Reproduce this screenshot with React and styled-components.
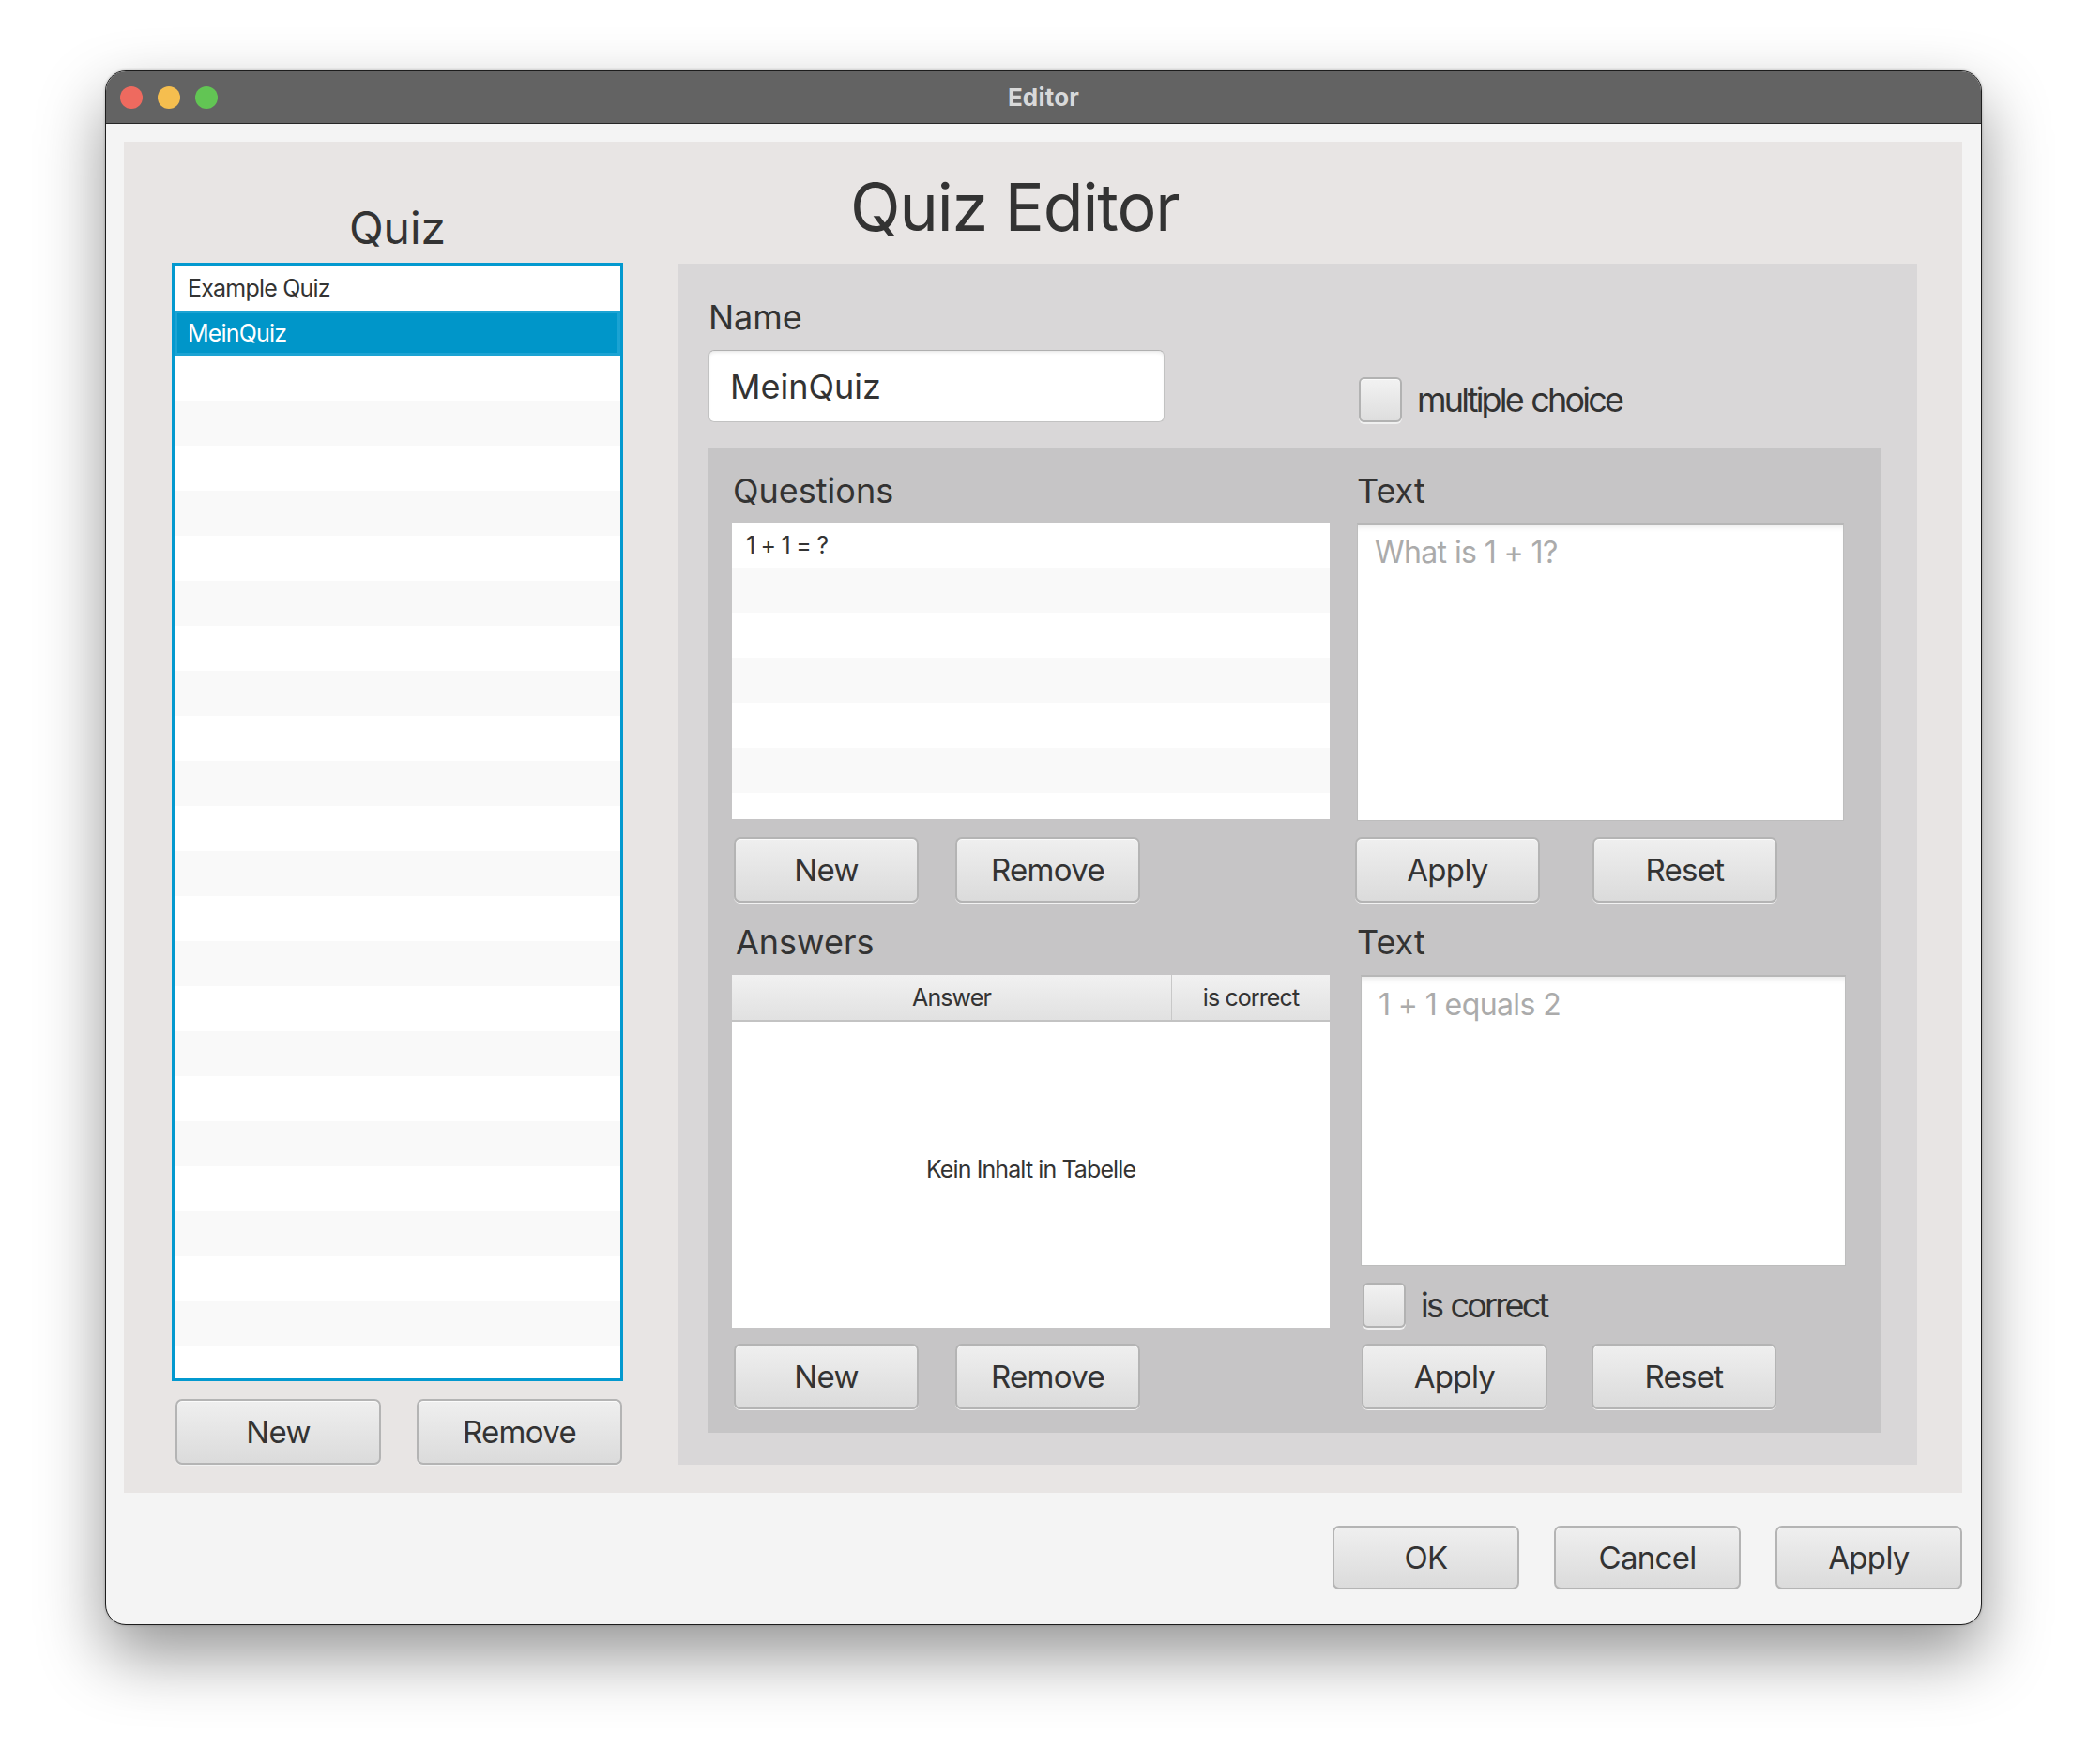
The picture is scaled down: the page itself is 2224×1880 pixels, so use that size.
import React from "react";
import styled, { createGlobalStyle } from "styled-components";

const GlobalStyle = createGlobalStyle`
  html, body {
    margin: 0;
    padding: 0;
    background: #ffffff;
  }
  body {
    font-family: Inter, "Noto Sans", "Liberation Sans", sans-serif;
    color: #333333;
  }
  * {
    box-sizing: border-box;
  }
`;

const Page = styled.div`
  width: 2224px;
  height: 1880px;
  padding: 75px 0 0 112px;
  overflow: hidden;
`;

const Window = styled.div`
  width: 2000px;
  height: 1657px;
  border: 1px solid #1d1d1d;
  border-radius: 22px;
  overflow: hidden;
  background: #f4f4f4;
  box-shadow: 0 32px 70px rgba(0, 0, 0, 0.42), 0 0 3px rgba(0, 0, 0, 0.25);
  display: flex;
  flex-direction: column;
`;

const TitleBar = styled.div`
  position: relative;
  height: 56px;
  flex: none;
  background: #636363;
  border-bottom: 1px solid #262626;
  display: flex;
  align-items: center;
  justify-content: center;
`;

const Lights = styled.div`
  position: absolute;
  left: 15px;
  top: 16px;
  display: flex;
  gap: 16px;
`;

const Light = styled.span`
  width: 24px;
  height: 24px;
  border-radius: 50%;
  background: ${(p) => p.$color};
`;

const WindowTitle = styled.div`
  font-size: 26px;
  font-weight: 700;
  color: #d9d9d9;
  letter-spacing: 0.2px;
`;

const Content = styled.div`
  flex: 1;
  padding: 19px 20px 0 19px;
  display: flex;
  flex-direction: column;
`;

const InnerPanel = styled.div`
  height: 1440px;
  background: #e8e5e4;
  display: flex;
  gap: 59px;
  padding-left: 51px;
`;

const LeftColumn = styled.div`
  width: 481px;
  display: flex;
  flex-direction: column;
`;

const LeftTitle = styled.div`
  height: 129px;
  padding-top: 68px;
  font-size: 48px;
  line-height: 48px;
  text-align: center;
  color: #333;
`;

const QuizList = styled.div`
  height: 1192px;
  border: 3px solid #0399cf;
  background: #ffffff;
  overflow: hidden;
`;

const ListRow = styled.div`
  height: 48px;
  flex: none;
  display: flex;
  align-items: center;
  padding-left: ${(p) => p.$pad || 14}px;
  font-size: 25px;
  letter-spacing: -0.8px;
  color: ${(p) => (p.$selected ? "#ffffff" : "#333333")};
  background: ${(p) =>
    p.$selected ? "#0096c9" : p.$odd ? "#f9f9f9" : "#ffffff"};
  box-shadow: ${(p) => (p.$selected ? "inset 0 0 0 3px #1ba3d3" : "none")};
`;

const LeftButtons = styled.div`
  margin-top: 19px;
  padding: 0 1px 0 4px;
  display: flex;
  justify-content: space-between;
`;

const Button = styled.button`
  width: ${(p) => p.$w || 197}px;
  height: ${(p) => p.$h || 70}px;
  border: 2px solid #b4b4b4;
  border-radius: 7px;
  background: linear-gradient(#efefef, #dbdbdb);
  box-shadow: inset 0 1px 0 #fbfbfb, 0 1px 0 #f2f2f2;
  font-family: inherit;
  font-size: 33px;
  letter-spacing: -0.7px;
  color: #333333;
  padding: 0;
  cursor: default;
`;

const RightColumn = styled.div`
  width: 1320px;
  display: flex;
  flex-direction: column;
`;

const EditorTitle = styled.div`
  height: 130px;
  padding-top: 35px;
  padding-left: 183px;
  font-size: 70px;
  line-height: 70px;
  letter-spacing: -1.1px;
  color: #333;
`;

const RightPanel = styled.div`
  height: 1280px;
  background: #d9d7d8;
  padding: 39px 38px 0 32px;
  display: flex;
  flex-direction: column;
`;

const Label = styled.div`
  font-size: 36px;
  line-height: 36px;
  color: #333;
  margin-top: ${(p) => p.$mt || 0}px;
  margin-bottom: ${(p) => p.$mb || 0}px;
  padding-left: ${(p) => p.$pl || 0}px;
`;

const NameRow = styled.div`
  display: flex;
  align-items: flex-end;
  height: 77px;
`;

const TextField = styled.div`
  width: 486px;
  height: 77px;
  background: #ffffff;
  border: 1px solid #c2c2c2;
  border-top-color: #b0b0b0;
  border-radius: 6px;
  box-shadow: inset 0 3px 4px -2px rgba(0, 0, 0, 0.12);
  display: flex;
  align-items: center;
  padding-left: 22px;
  font-size: 36px;
  color: #333;
`;

const CheckGroup = styled.label`
  display: flex;
  align-items: center;
  gap: 16px;
  margin-left: ${(p) => p.$ml || 0}px;
  font-size: 36px;
  letter-spacing: -2.8px;
  word-spacing: 2px;
  color: #333;
`;

const CheckBox = styled.span`
  width: 46px;
  height: 48px;
  flex: none;
  border: 2px solid #b2b2b2;
  border-radius: 6px;
  background: linear-gradient(#f2f2f2, #dedede);
  box-shadow: inset 0 1px 0 #fafafa, 0 2px 0 #f0f0f0;
`;

const DarkPanel = styled.div`
  margin-top: 27px;
  background: #c6c5c6;
  padding: 28px 40px 25px 25px;
  display: grid;
  grid-template-columns: 637px 519px;
  column-gap: 29px;
  align-items: start;
`;

const StripedList = styled.div`
  height: 316px;
  background: #ffffff;
  overflow: hidden;
  display: flex;
  flex-direction: column;
`;

const TextArea = styled.div`
  height: ${(p) => p.$h}px;
  width: ${(p) => p.$w || 517}px;
  margin-left: ${(p) => p.$ml || 0}px;
  background: #ffffff;
  border: 1px solid #bdbdbd;
  border-top: 2px solid #b7b7b7;
  box-shadow: inset 0 6px 6px -4px rgba(0, 0, 0, 0.1);
  padding: 11px 18px;
  font-size: 32px;
  line-height: 38px;
  letter-spacing: -0.6px;
  color: #ababab;
`;

const ButtonRow = styled.div`
  margin-top: ${(p) => p.$mt}px;
  margin-left: ${(p) => p.$ml || 0}px;
  display: flex;
  gap: ${(p) => p.$gap}px;
`;

const Table = styled.div`
  height: 376px;
  background: #ffffff;
  display: flex;
  flex-direction: column;
`;

const TableHead = styled.div`
  height: 50px;
  flex: none;
  display: flex;
  border-bottom: 2px solid #c3c3c3;
  background: linear-gradient(#f1f1f1, #e1e1e1);
`;

const HeadCell = styled.div`
  width: ${(p) => p.$w}px;
  flex: none;
  display: flex;
  align-items: center;
  justify-content: center;
  font-size: 25px;
  letter-spacing: -0.9px;
  color: #333;
  border-right: ${(p) => (p.$last ? "none" : "1px solid #c8c8c8")};
`;

const EmptyText = styled.div`
  flex: 1;
  display: flex;
  align-items: center;
  justify-content: center;
  font-size: 25px;
  letter-spacing: -0.9px;
  color: #333;
  padding-bottom: 12px;
`;

const AnswerStack = styled.div`
  display: flex;
  flex-direction: column;
  gap: 18px;
`;

const Footer = styled.div`
  display: flex;
  justify-content: flex-end;
  gap: 37px;
  padding: 35px 0 0 0;
`;

const quizzes = ["Example Quiz", "MeinQuiz"];

export default function App() {
  const quizRows = Array.from({ length: 25 }, (_, i) => i);
  const questionRows = Array.from({ length: 7 }, (_, i) => i);

  return (
    <>
      <GlobalStyle />
      <Page>
        <Window>
          <TitleBar>
            <Lights>
              <Light $color="#ee6a5f" />
              <Light $color="#f5be4f" />
              <Light $color="#62c554" />
            </Lights>
            <WindowTitle>Editor</WindowTitle>
          </TitleBar>
          <Content>
            <InnerPanel>
              <LeftColumn>
                <LeftTitle>Quiz</LeftTitle>
                <QuizList>
                  {quizRows.map((i) => (
                    <ListRow key={i} $odd={i % 2 === 1} $selected={i === 1}>
                      {quizzes[i] || ""}
                    </ListRow>
                  ))}
                </QuizList>
                <LeftButtons>
                  <Button $w={219}>New</Button>
                  <Button $w={219}>Remove</Button>
                </LeftButtons>
              </LeftColumn>

              <RightColumn>
                <EditorTitle>Quiz Editor</EditorTitle>
                <RightPanel>
                  <Label $mb={17}>Name</Label>
                  <NameRow>
                    <TextField>MeinQuiz</TextField>
                    <CheckGroup $ml={207}>
                      <CheckBox />
                      multiple choice
                    </CheckGroup>
                  </NameRow>

                  <DarkPanel>
                    <Label $mb={16} $pl={1}>Questions</Label>
                    <Label $mb={16}>Text</Label>

                    <StripedList>
                      {questionRows.map((i) => (
                        <ListRow key={i} $odd={i % 2 === 1} $pad={15}>
                          {i === 0 ? "1 + 1 = ?" : ""}
                        </ListRow>
                      ))}
                    </StripedList>
                    <TextArea $h={318} $w={519}>What is 1 + 1?</TextArea>

                    <ButtonRow $mt={17} $ml={2} $gap={39}>
                      <Button>New</Button>
                      <Button>Remove</Button>
                    </ButtonRow>
                    <ButtonRow $mt={17} $ml={-2} $gap={56}>
                      <Button>Apply</Button>
                      <Button>Reset</Button>
                    </ButtonRow>

                    <Label $mt={24} $mb={17} $pl={4}>Answers</Label>
                    <Label $mt={24} $mb={17}>Text</Label>

                    <Table>
                      <TableHead>
                        <HeadCell $w={469}>Answer</HeadCell>
                        <HeadCell $w={168} $last>is correct</HeadCell>
                      </TableHead>
                      <EmptyText>Kein Inhalt in Tabelle</EmptyText>
                    </Table>
                    <AnswerStack>
                      <TextArea $h={310} $ml={4}>1 + 1 equals 2</TextArea>
                      <CheckGroup $ml={6}>
                        <CheckBox />
                        is correct
                      </CheckGroup>
                    </AnswerStack>

                    <ButtonRow $mt={17} $ml={2} $gap={39}>
                      <Button>New</Button>
                      <Button>Remove</Button>
                    </ButtonRow>
                    <ButtonRow $mt={17} $ml={5} $gap={47}>
                      <Button $w={198}>Apply</Button>
                      <Button>Reset</Button>
                    </ButtonRow>
                  </DarkPanel>
                </RightPanel>
              </RightColumn>
            </InnerPanel>

            <Footer>
              <Button $w={199} $h={68}>OK</Button>
              <Button $w={199} $h={68}>Cancel</Button>
              <Button $w={199} $h={68}>Apply</Button>
            </Footer>
          </Content>
        </Window>
      </Page>
    </>
  );
}
